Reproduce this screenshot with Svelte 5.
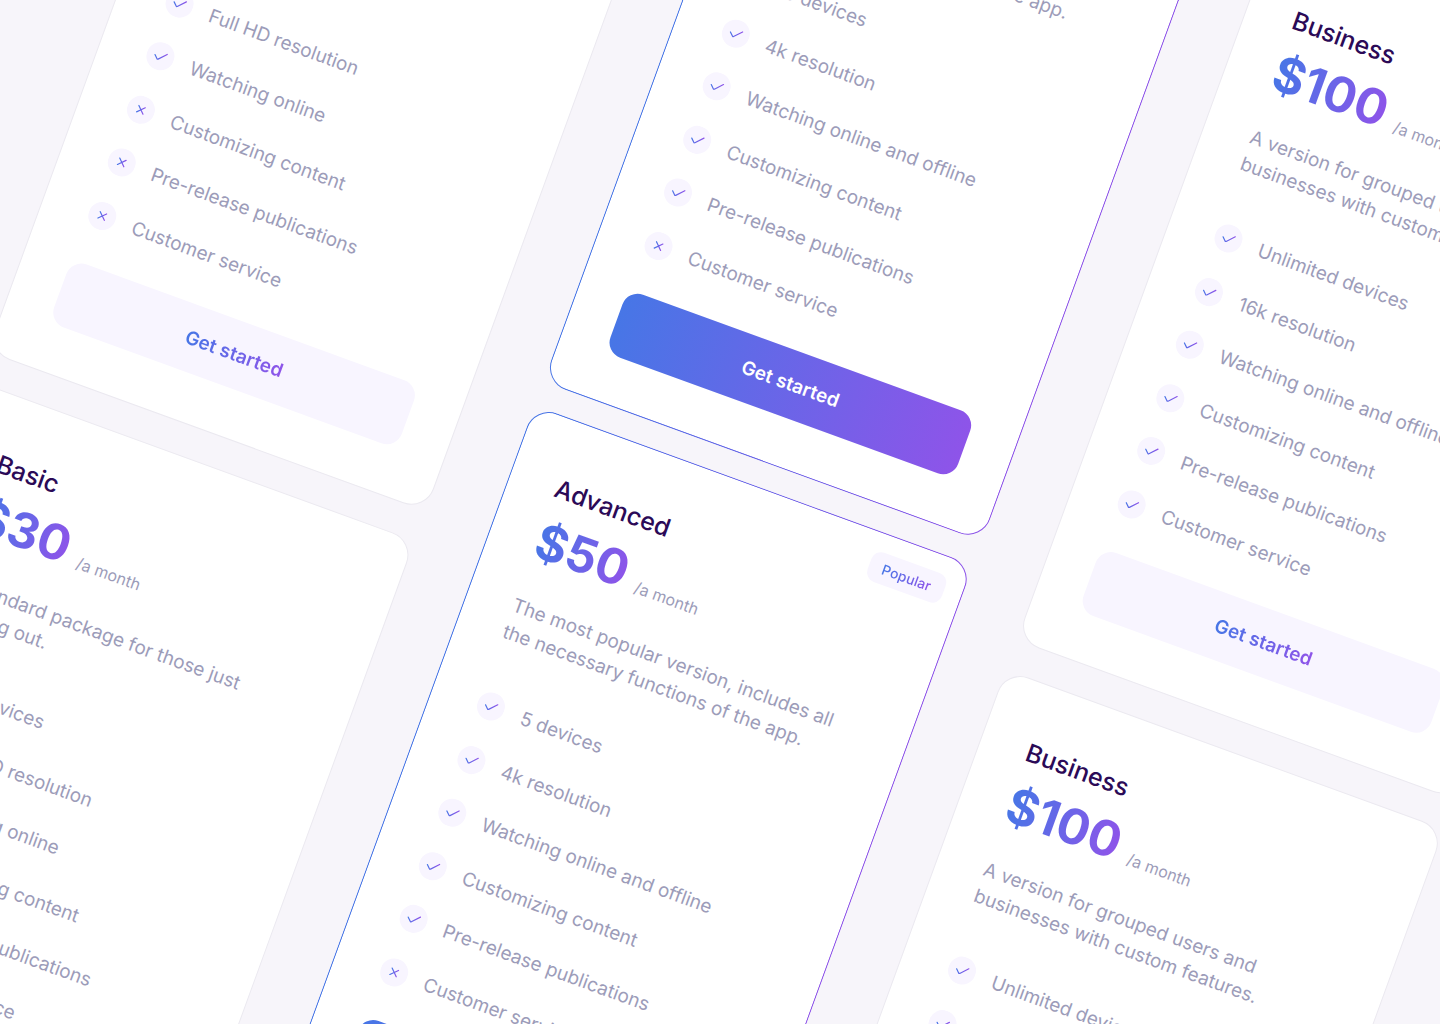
<script>
  const plans = [
    {
      id: 'basic',
      name: 'Basic',
      price: '$30',
      text: 'A standard package for those just starting out.',
      features: [
        ['2 devices', true],
        ['Full HD resolution', true],
        ['Watching online', true],
        ['Customizing content', false],
        ['Pre-release publications', false],
        ['Customer service', false],
      ],
    },
    {
      id: 'advanced',
      name: 'Advanced',
      price: '$50',
      popular: true,
      text: 'The most popular version, includes all the necessary functions of the app.',
      features: [
        ['5 devices', true],
        ['4k resolution', true],
        ['Watching online and offline', true],
        ['Customizing content', true],
        ['Pre-release publications', true],
        ['Customer service', false],
      ],
    },
    {
      id: 'business',
      name: 'Business',
      price: '$100',
      text: 'A version for grouped users and businesses with custom features.',
      features: [
        ['Unlimited devices', true],
        ['16k resolution', true],
        ['Watching online and offline', true],
        ['Customizing content', true],
        ['Pre-release publications', true],
        ['Customer service', true],
      ],
    },
  ];
</script>

<svg class="defs" width="0" height="0" aria-hidden="true">
  <defs>
    <linearGradient id="stroke">
      <stop offset="0" stop-color="#4776e6" />
      <stop offset="1" stop-color="#8e54e9" />
    </linearGradient>
  </defs>
</svg>

<main class="stage">
  <div class="board">
    {#each plans as plan (plan.id)}
      <div class="column {plan.id}">
        {#each [0, 1] as copy (copy)}
          <article class="card" class:featured={plan.popular}>
            {#if plan.popular}
              <span class="badge"><span class="tint">Popular</span></span>
            {/if}
            <h2>{plan.name}</h2>
            <p class="price"><strong class="tint">{plan.price}</strong><span>/a month</span></p>
            <p class="text">{plan.text}</p>
            <ul>
              {#each plan.features as [label, included] (label)}
                <li>
                  <svg viewBox="0 0 28 28" aria-hidden="true">
                    <circle cx="14" cy="14" r="14" />
                    {#if included}
                      <path d="M8.3 14.2 L12 17.8 L12.8 17.5 L19.8 10" />
                    {:else}
                      <path d="M10.6 10.6 L17.4 17.4 M17.4 10.6 L10.6 17.4" />
                    {/if}
                  </svg>
                  <span>{label}</span>
                </li>
              {/each}
            </ul>
            <button type="button"><span class:tint={!plan.popular}>Get started</span></button>
          </article>
        {/each}
      </div>
    {/each}
  </div>
</main>

<style>
  :global(body) {
    background: #f7f5fa;
  }

  .defs {
    position: absolute;
  }

  .stage {
    height: 100vh;
    overflow: hidden;
    background: #f7f5fa;
    color: #9c9cb9;
    font-family: Inter, 'Liberation Sans', sans-serif;
    font-size: 19px;
    line-height: 28px;
  }

  .board {
    display: flex;
    align-items: flex-start;
    gap: 66px;
    width: max-content;
    transform: rotate(20deg) translate(108px, -575px);
    transform-origin: 0 0;
  }

  .column {
    display: flex;
    flex-direction: column;
    gap: 31px;
  }

  .basic {
    padding-top: 162px;
  }

  .advanced {
    gap: 25px;
  }

  .business {
    padding-top: 81px;
  }

  .card {
    position: relative;
    box-sizing: border-box;
    width: 467px;
    padding: 48px 48px 48px 47px;
    border: 1px solid #ebe9f0;
    border-radius: 24px;
    background: #fff;
  }

  .featured {
    border-color: transparent;
    background:
      linear-gradient(#fff, #fff) padding-box,
      linear-gradient(90deg, #4776e6, #8e54e9) border-box;
  }

  .tint {
    background: linear-gradient(90deg, #4776e6, #8e54e9);
    background-clip: text;
    color: transparent;
  }

  .badge {
    position: absolute;
    top: 18px;
    right: 18px;
    padding: 4px 14px;
    border-radius: 10px;
    background: #f8f5ff;
    font-size: 14px;
    line-height: 23px;
    font-weight: 500;
  }

  h2 {
    margin: 0;
    color: #2b0a57;
    font-size: 25px;
    line-height: 42px;
    font-weight: 500;
  }

  .price {
    display: flex;
    align-items: baseline;
    gap: 12px;
    margin: 0;
    font-size: 16px;
    line-height: 16px;
  }

  .price strong {
    font-size: 49px;
    line-height: 68px;
    font-weight: 700;
  }

  .text {
    margin: 22px 0 47px;
  }

  ul {
    display: flex;
    flex-direction: column;
    justify-content: space-between;
    height: 311px;
    margin: 0 0 37px;
    padding: 0;
    list-style: none;
  }

  li {
    display: flex;
    align-items: center;
    gap: 18px;
    height: 28px;
  }

  li span {
    padding-top: 2px;
  }

  li svg {
    width: 28px;
    height: 28px;
  }

  circle {
    fill: #f8f5ff;
  }

  path {
    fill: none;
    stroke: url(#stroke);
    stroke-width: 1.2;
    stroke-linecap: round;
    stroke-linejoin: round;
  }

  button {
    display: block;
    width: 100%;
    padding: 20px 19px 19px;
    border: 0;
    border-radius: 16px;
    background: #f8f5ff;
    color: #fff;
    font: inherit;
    font-weight: 600;
  }

  .featured button {
    background: linear-gradient(90deg, #4776e6, #8e54e9);
  }
</style>
